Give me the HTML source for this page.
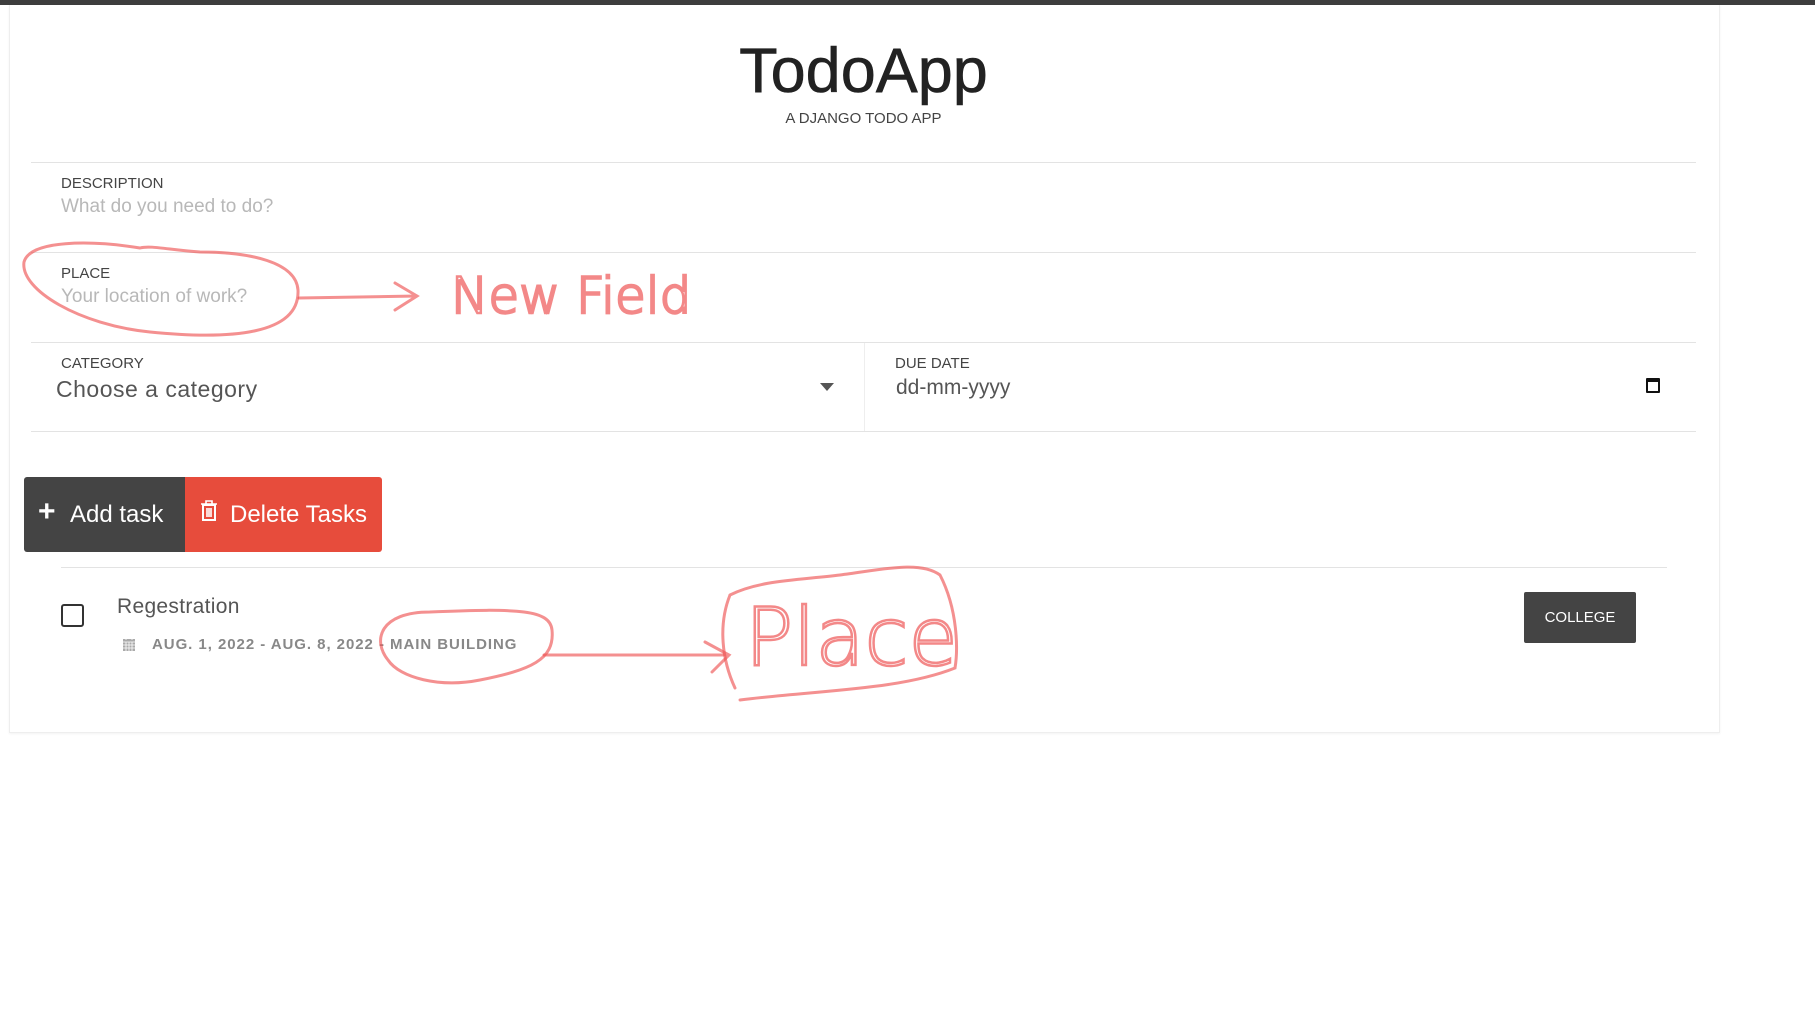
<!DOCTYPE html>
<html><head><meta charset="utf-8"><style>
*{box-sizing:border-box;margin:0;padding:0}
body{width:1815px;height:1009px;background:#fff;font-family:"Liberation Sans",sans-serif;position:relative;overflow:hidden;color:#333}
.topbar{position:absolute;left:0;top:0;width:1815px;height:5px;background:#3d3d3d}
.card{position:absolute;left:9px;top:5px;width:1711px;height:728px;border:1px solid #eee;border-top:none;box-shadow:0 1px 2px rgba(0,0,0,.05)}
.abs{position:absolute}
.hl{position:absolute;height:1px;background:#e3e3e3}
.lbl{position:absolute;font-size:15px;color:#444}
.ph{position:absolute;font-size:19px;color:#b8b8b8}
</style></head><body>
<div class="topbar"></div>
<div class="card"></div>
<div class="abs" style="left:0;width:1727px;top:35px;text-align:center;font-size:63px;color:#222;-webkit-text-stroke:.6px #222">TodoApp</div>
<div class="abs" style="left:0;width:1727px;top:110px;text-align:center;font-size:15px;color:#444">A DJANGO TODO APP</div>
<div class="hl" style="left:31px;width:1665px;top:162px"></div>
<div class="lbl" style="left:61px;top:175px">DESCRIPTION</div>
<div class="ph" style="left:61px;top:196px">What do you need to do?</div>
<div class="hl" style="left:31px;width:1665px;top:252px"></div>
<div class="lbl" style="left:61px;top:265px">PLACE</div>
<div class="ph" style="left:61px;top:286px">Your location of work?</div>
<div class="hl" style="left:31px;width:1665px;top:342px"></div>
<div class="abs" style="left:864px;top:343px;width:1px;height:88px;background:#eee"></div>
<div class="lbl" style="left:61px;top:355px">CATEGORY</div>
<div class="abs" style="left:56px;top:376px;font-size:23px;color:#555;letter-spacing:.5px">Choose a category</div>
<div class="abs" style="left:820px;top:383px;width:0;height:0;border-left:7px solid transparent;border-right:7px solid transparent;border-top:8px solid #555"></div>
<div class="lbl" style="left:895px;top:355px">DUE DATE</div>
<div class="abs" style="left:896px;top:376px;font-size:21px;color:#555">dd-mm-yyyy</div>
<div class="abs" style="left:1646px;top:378px;width:14px;height:15px;border:2px solid #111;border-top-width:4px;border-radius:1px"></div>
<div class="hl" style="left:31px;width:1665px;top:431px"></div>
<div class="abs" style="left:24px;top:477px;width:161px;height:75px;background:#444;border-radius:3px 0 0 3px;color:#fff;font-size:24px;line-height:75px;padding-left:46px">Add task</div>
<div class="abs" style="left:38px;top:500px;font-size:30px;color:#fff;font-weight:bold;line-height:24px">+</div>
<div class="abs" style="left:185px;top:477px;width:197px;height:75px;background:#e74c3c;border-radius:0 3px 3px 0;color:#fff;font-size:24px;line-height:75px;padding-left:45px">Delete Tasks</div>
<svg class="abs" style="left:200px;top:500px" width="18" height="22" viewBox="0 0 18 22"><rect x="3" y="5" width="12" height="15" fill="none" stroke="#fff" stroke-width="2"/><path d="M1 4h16M6 4V1h6v3M7 8v9M9 8v9M11 8v9" stroke="#fff" stroke-width="1.6" fill="none"/></svg>
<div class="hl" style="left:61px;width:1606px;top:567px"></div>
<div class="abs" style="left:61px;top:604px;width:23px;height:23px;border:2px solid #333;border-radius:3px"></div>
<div class="abs" style="left:117px;top:595px;font-size:21px;color:#555;letter-spacing:.3px">Regestration</div>
<svg class="abs" style="left:122px;top:637px" width="14" height="15" viewBox="0 0 14 15"><rect x="1" y="2" width="12" height="12" fill="#aaa"/><path d="M1 5h12M4 0v3M10 0v3M1 8h12M1 11h12M4 5v9M7 5v9M10 5v9" stroke="#fff" stroke-width=".8"/></svg>
<div class="abs" style="left:152px;top:636px;font-size:15px;font-weight:bold;color:#888;letter-spacing:.95px">AUG. 1, 2022 - AUG. 8, 2022 - MAIN BUILDING</div>
<div class="abs" style="left:1524px;top:592px;width:112px;height:51px;background:#444;border-radius:2px;color:#fff;font-size:15px;line-height:51px;text-align:center">COLLEGE</div>
<svg class="abs" style="left:0;top:0" width="1815" height="1009">
<g fill="none" stroke="#e55" stroke-opacity=".65" stroke-width="3" stroke-linecap="round">
<path d="M140 248 C90 240 30 240 24 262 C20 290 80 325 150 332 C230 340 300 335 298 290 C296 262 250 252 200 252 C170 250 150 245 140 248"/>
<path d="M299 298 L417 296 M395 283 L417 296 L395 310"/>
<path d="M430 612 C380 612 372 640 388 660 C400 678 440 688 480 680 C530 670 555 660 552 630 C550 610 520 608 430 612"/>
<path d="M544 655 L729 655 M705 642 L729 655 L712 672"/>
<path d="M730 595 C760 580 800 580 840 575 C880 570 920 560 940 575 C958 610 958 650 955 668 C900 690 820 690 740 700 M730 595 C718 625 722 660 735 688"/>
</g>
<text x="451" y="313" font-family="DejaVu Sans" font-weight="200" font-size="50" fill="none" stroke="#e55" stroke-opacity=".7" stroke-width="2.5" letter-spacing="0">New Field</text>
<text x="745" y="665" font-family="DejaVu Sans" font-weight="200" font-size="80" fill="none" stroke="#e55" stroke-opacity=".7" stroke-width="2.5">Place</text>
</svg>
</body></html>
